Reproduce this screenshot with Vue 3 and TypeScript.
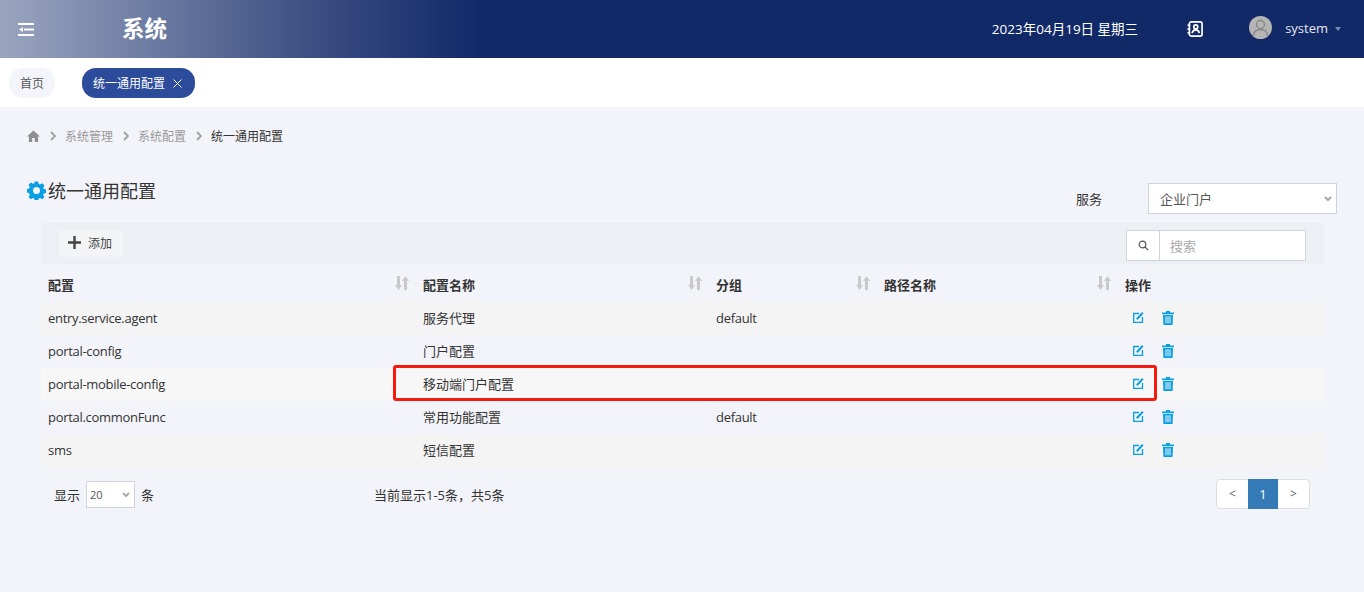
<script setup lang="ts">
interface Row {
  key: string
  name: string
  group: string
  path: string
}

const columns = ['配置', '配置名称', '分组', '路径名称']

const rows: Row[] = [
  { key: 'entry.service.agent', name: '服务代理', group: 'default', path: '' },
  { key: 'portal-config', name: '门户配置', group: '', path: '' },
  { key: 'portal-mobile-config', name: '移动端门户配置', group: '', path: '' },
  { key: 'portal.commonFunc', name: '常用功能配置', group: 'default', path: '' },
  { key: 'sms', name: '短信配置', group: '', path: '' }
]
</script>

<template>
  <div class="page">
    <header class="topbar">
      <div class="topbar-left">
        <svg class="menu-icon" width="16" height="13" viewBox="0 0 16 13">
          <path d="M0 0h16v2H0zM6 5.500h10v2H6zM0 11h16v2H0zM1 6.500l4-2.600v5.200z" fill="#fff" />
        </svg>
        <span class="system-name">系统</span>
      </div>
      <div class="topbar-right">
        <span class="date">2023年04月19日 星期三</span>
        <svg class="book-icon" width="16" height="16" viewBox="0 0 17 17" fill="none" stroke="#fff" stroke-width="1.800">
          <rect x="2.500" y="1" width="13.500" height="15" rx="2" />
          <circle cx="9.300" cy="6.300" r="2.100" />
          <path d="M5.500 13c.4-2.600 1.800-3.600 3.800-3.600s3.400 1 3.800 3.600" />
          <path d="M0.500 4.500h3M0.500 8.500h3M0.500 12.500h3" />
        </svg>
        <span class="avatar">
          <svg width="23" height="23" viewBox="0 0 23 23" fill="none" stroke="#888" stroke-width="1.300">
            <circle cx="11.500" cy="8.500" r="4" />
            <path d="M4.500 20c0-4.500 3-6.500 7-6.500s7 2 7 6.500" />
          </svg>
        </span>
        <span class="user">system</span>
        <span class="caret"></span>
      </div>
    </header>

    <nav class="tabs">
      <span class="tab">首页</span>
      <span class="tab active">
        统一通用配置
        <svg class="tab-close" width="9" height="9" viewBox="0 0 9 9" stroke="#fff" stroke-width="1">
          <path d="M.5.500l8 8M8.500.500l-8 8" />
        </svg>
      </span>
    </nav>

    <main class="content">
      <div class="crumbs">
        <svg width="13" height="12" viewBox="0 0 13 12">
          <path d="M6.500.5 0 6.400h1.900V12h3.300V8h2.600v4h3.300V6.400H13z" fill="#8f8f8f" />
        </svg>
        <span class="sep"><svg width="6" height="10" viewBox="0 0 6 10" fill="none" stroke="#a0a0a0" stroke-width="1.800"><path d="M1 1l4 4-4 4" /></svg></span>
        <span>系统管理</span>
        <span class="sep"><svg width="6" height="10" viewBox="0 0 6 10" fill="none" stroke="#a0a0a0" stroke-width="1.800"><path d="M1 1l4 4-4 4" /></svg></span>
        <span>系统配置</span>
        <span class="sep"><svg width="6" height="10" viewBox="0 0 6 10" fill="none" stroke="#a0a0a0" stroke-width="1.800"><path d="M1 1l4 4-4 4" /></svg></span>
        <span class="current">统一通用配置</span>
      </div>

      <div class="title-row">
        <h1 class="title">
          <svg width="19" height="19" viewBox="0 0 19 19">
            <path
              fill="#0a9fe2"
              fill-rule="evenodd"
              d="M7.800.5h3.400l.5 2.400 1.400.6 2.100-1.300 2.300 2.400-1.300 2 .6 1.500 2.400.5v3.400l-2.400.5-.6 1.400 1.300 2.100-2.300 2.300-2.100-1.300-1.400.6-.5 2.400H7.800l-.5-2.400-1.400-.6-2.100 1.300-2.300-2.300 1.300-2.100-.6-1.400L0 11.300V7.900l2.200-.5.6-1.500-1.300-2 2.300-2.400 2.100 1.300 1.400-.6zM9.500 6a3.500 3.500 0 1 0 0 7 3.500 3.500 0 0 0 0-7z"
            />
          </svg>
          统一通用配置
        </h1>
        <div class="service">
          <label class="service-label">服务</label>
          <select class="service-select">
            <option>企业门户</option>
          </select>
        </div>
      </div>

      <div class="panel">
        <div class="toolbar">
          <button class="add-btn">
            <svg width="13" height="13" viewBox="0 0 13 13" fill="#444">
              <path d="M5.300 0h2.400v5.300H13v2.400H7.700V13H5.300V7.700H0V5.300h5.300z" />
            </svg>
            添加
          </button>
          <div class="search">
            <span class="search-icon">
              <svg width="11" height="11" viewBox="0 0 11 11" fill="none" stroke="#555" stroke-width="1.200">
                <circle cx="4.500" cy="4.500" r="3.300" />
                <path d="M7 7l3.200 3.200" />
              </svg>
            </span>
            <input class="search-input" placeholder="搜索" />
          </div>
        </div>

        <div class="table">
          <div class="tr head">
            <div v-for="col in columns" :key="col" class="th">
              {{ col }}
              <svg class="sort" width="14" height="14" viewBox="0 0 14 14" fill="#c9c9c9">
                <path d="M2 0h3v9h2l-3.500 5L0 9h2zM12 14H9V5H7l3.500-5L14 5h-2z" />
              </svg>
            </div>
            <div class="th">操作</div>
          </div>
          <div v-for="row in rows" :key="row.key" class="tr">
            <div class="td latin">{{ row.key }}</div>
            <div class="td">{{ row.name }}</div>
            <div class="td latin">{{ row.group }}</div>
            <div class="td">{{ row.path }}</div>
            <div class="td actions">
              <svg width="11" height="11" viewBox="0 0 11 11" fill="none" stroke="#0a9fe2">
                <path d="M6 1.500H.7v8.800h8.800V5" stroke-width="1.300" />
                <path d="M3.800 7.200 9.800.8" stroke-width="2" />
              </svg>
              <svg width="12" height="14" viewBox="0 0 12 14" fill="#0a9fe2">
                <path
                  fill-rule="evenodd"
                  d="M4 0h4v1.500h4V3.200H0V1.500h4zM1 4h10l-.4 10H1.400zM3.500 5.200v7h1v-7zM5.500 5.200v7h1v-7zM7.500 5.200v7h1v-7z"
                />
              </svg>
            </div>
          </div>
          <div class="highlight"></div>
        </div>

        <div class="footer">
          <div class="length">
            显示
            <select class="length-select">
              <option>20</option>
            </select>
            条
          </div>
          <div class="info">当前显示1-5条，共5条</div>
          <div class="pager">
            <span class="page-btn">&lt;</span>
            <span class="page-btn current-page">1</span>
            <span class="page-btn">&gt;</span>
          </div>
        </div>
      </div>
    </main>
  </div>
</template>

<style>
body {
  background: #fff;
}
</style>

<style scoped>
.page {
  font-family: "Open Sans", "Noto Sans CJK SC", sans-serif;
  font-size: 13px;
  color: #333;
  width: 1364px;
  height: 592px;
  display: flex;
  flex-direction: column;
  overflow: hidden;
}

.topbar {
  height: 58px;
  flex-shrink: 0;
  box-sizing: border-box;
  padding-bottom: 3px;
  display: flex;
  align-items: center;
  justify-content: space-between;
  color: #fff;
  background: linear-gradient(90deg, #9aa5bf 0, #3f5285 300px, #122968 480px, #122968 100%);
}

.topbar-left {
  display: flex;
  align-items: center;
}

.menu-icon {
  margin: 3px 0 0 18px;
}

.system-name {
  margin-left: 88px;
  font-size: 22.500px;
  font-weight: 700;
}

.topbar-right {
  display: flex;
  align-items: center;
}

.date {
  font-size: 13.500px;
}

.book-icon {
  margin: 2px 0 0 49px;
}

.avatar {
  margin-left: 46px;
  width: 23px;
  height: 23px;
  border-radius: 50%;
  background: #b5b5b5;
  overflow: hidden;
  display: block;
}

.user {
  margin-left: 13px;
  font-size: 13px;
  color: #e4e7ef;
}

.caret {
  margin: 2px 23px 0 7px;
  border-left: 3.500px solid transparent;
  border-right: 3.500px solid transparent;
  border-top: 4px solid #7d8cb0;
}

.tabs {
  height: 49px;
  flex-shrink: 0;
  background: #fff;
  display: flex;
  align-items: flex-start;
  gap: 27px;
  padding: 10px 0 0 9px;
  box-sizing: border-box;
}

.tab {
  height: 30px;
  padding: 0 11px;
  border-radius: 14px;
  background: #f4f5fa;
  display: flex;
  align-items: center;
  font-size: 12px;
  color: #555;
}

.tab.active {
  background: #2c4b9b;
  color: #fff;
  padding-right: 13px;
}

.tab-close {
  margin-left: 8px;
}

.content {
  flex: 1;
  background: #f3f4f9;
  padding: 21px 27px 0 27px;
  box-sizing: border-box;
}

.crumbs {
  display: flex;
  align-items: center;
  height: 16px;
  font-size: 12px;
  color: #999;
}

.crumbs .sep {
  width: 25px;
  display: flex;
  justify-content: center;
}

.crumbs .current {
  color: #333;
}

.title-row {
  display: flex;
  justify-content: space-between;
  align-items: flex-start;
  margin-top: 39px;
  height: 40px;
}

.title {
  margin: -6px 0 0;
  display: flex;
  align-items: center;
  gap: 2px;
  height: 26px;
  font-size: 18px;
  font-weight: 400;
  color: #333;
}

.service {
  display: flex;
  align-items: center;
}

.service-label {
  font-size: 13px;
  width: 72px;
}

.service-select {
  width: 189px;
  height: 31px;
  box-sizing: border-box;
  padding: 0 7px 0 11px;
  border: 1px solid #d0d3de;
  background: #fff url("data:image/svg+xml,%3Csvg xmlns='http://www.w3.org/2000/svg' width='8' height='6'%3E%3Cpath d='M1 1l3 3 3-3' fill='none' stroke='%23aaa' stroke-width='2'/%3E%3C/svg%3E") no-repeat right 4px center;
  appearance: none;
  font: inherit;
  color: #555;
}

.panel {
  margin-left: 14px;
  width: 1283px;
}

.toolbar {
  height: 41px;
  background: #ecf0f5;
  display: flex;
  align-items: center;
  justify-content: space-between;
  padding: 0 18px 0 18px;
  box-sizing: border-box;
}

.add-btn {
  height: 27px;
  width: 64px;
  border: 0;
  border-radius: 4px;
  background: #f3f4f6;
  display: flex;
  align-items: center;
  gap: 7px;
  padding: 0 0 2px 9px;
  font: inherit;
  font-size: 12px;
  color: #444;
}

.search {
  display: flex;
  width: 180px;
  height: 31px;
  margin-top: 4px;
  box-sizing: border-box;
  border: 1px solid #d0d3de;
  background: #fff;
}

.search-icon {
  width: 32px;
  border-right: 1px solid #d0d3de;
  display: flex;
  align-items: center;
  justify-content: center;
}

.search-input {
  flex: 1;
  min-width: 0;
  border: 0;
  outline: 0;
  padding: 0 10px;
  font: inherit;
}

.search-input::placeholder {
  color: #aaa;
}

.table {
  position: relative;
}

.tr {
  display: grid;
  grid-template-columns: 375px 293px 168px 241px 206px;
  height: 33px;
  align-items: center;
}

.tr.head {
  height: 38px;
}

.tr:nth-child(even) {
  background: #f4f4f4;
}

.tr:nth-child(4) {
  background: #f7f7f7;
}

.th {
  padding: 2px 7px 0;
  display: flex;
  align-items: center;
  justify-content: space-between;
  font-weight: 700;
  color: #333;
}

.th .sort {
  margin-right: 0;
  margin-top: -3px;
}

.td {
  padding: 0 7px 2px;
  white-space: nowrap;
  color: #333;
}

.latin {
  letter-spacing: -0.3px;
}

.actions {
  display: flex;
  align-items: center;
  gap: 18px;
  padding-left: 15px;
}

.highlight {
  position: absolute;
  left: 352px;
  top: 101px;
  width: 764px;
  height: 36px;
  box-sizing: border-box;
  border: 3px solid #f41a10;
  border-radius: 3px;
  pointer-events: none;
}

.footer {
  display: grid;
  grid-template-columns: 320px 1fr auto;
  align-items: center;
  height: 55px;
  padding: 0 14px 0 13px;
}

.length {
  display: flex;
  align-items: center;
  gap: 6px;
}

.length-select {
  width: 49px;
  height: 27px;
  box-sizing: border-box;
  padding: 0 0 0 3px;
  border: 1px solid #d0d3de;
  background: #fff url("data:image/svg+xml,%3Csvg xmlns='http://www.w3.org/2000/svg' width='8' height='6'%3E%3Cpath d='M1 1l3 3 3-3' fill='none' stroke='%23aaa' stroke-width='2'/%3E%3C/svg%3E") no-repeat right 4px center;
  appearance: none;
  font: inherit;
  font-size: 11px;
  color: #555;
}

.pager {
  display: flex;
  height: 30px;
  margin-top: -2px;
  box-sizing: border-box;
  border: 1px solid #ddd;
  border-radius: 4px;
  background: #fff;
}

.page-btn {
  width: 31px;
  display: flex;
  align-items: center;
  justify-content: center;
  font-size: 12px;
  color: #666;
}

.current-page {
  width: 30px;
  margin: -1px 0;
  background: #337ab7;
  color: #fff;
  font-size: 13px;
}
</style>
